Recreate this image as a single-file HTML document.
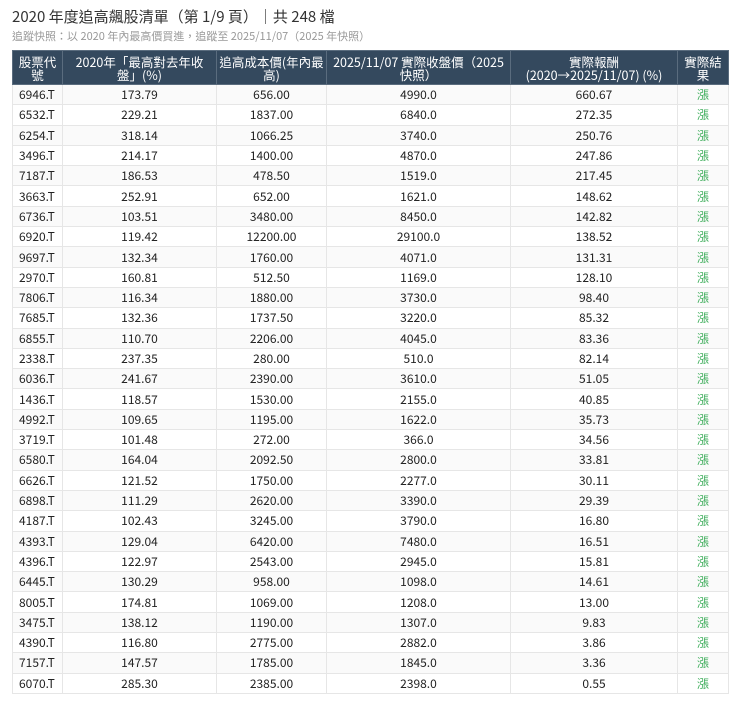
<!DOCTYPE html><html><head><meta charset="utf-8"><style>
body{margin:0;background:#fff;font-family:"Noto Sans CJK TC",sans-serif;color:#222}
.t{position:absolute;left:12px;top:6px;font-size:15px;color:#333;line-height:22px}
.s{position:absolute;left:12px;top:28px;font-size:11px;color:#999;line-height:16px}
table{position:absolute;left:12px;top:50px;width:716px;border-collapse:collapse;font-size:12px;table-layout:fixed}
th{background:#34495e;color:#fff;font-weight:normal;height:33px;line-height:13px;padding:0;border:1px solid #5a6c7e;font-size:12.5px;white-space:nowrap;overflow:hidden}
td{height:19.3px;text-align:center;border:1px solid #e6e6e6;padding:0;line-height:19px}
td:first-child{text-align:left;padding-left:6px}
tr:nth-child(even) td{background:#fafafa}
td.g{color:#3fae5c}
</style></head><body>
<div class="t">2020 年度追高飆股清單（第 1/9 頁）｜共 248 檔</div>
<div class="s">追蹤快照：以 2020 年內最高價買進，追蹤至 2025/11/07（2025 年快照）</div>
<table>
<colgroup><col style="width:50px"><col style="width:154px"><col style="width:110px"><col style="width:184px"><col style="width:167px"><col style="width:51px"></colgroup>
<tr><th>股票代<br>號</th><th>2020年「最高對去年收<br>盤」(%)</th><th>追高成本價(年內最<br>高)</th><th>2025/11/07 實際收盤價（2025<br>快照）</th><th>實際報酬<br>(2020→2025/11/07) (%)</th><th>實際結<br>果</th></tr>
<tr><td>6946.T</td><td>173.79</td><td>656.00</td><td>4990.0</td><td>660.67</td><td class="g">漲</td></tr>
<tr><td>6532.T</td><td>229.21</td><td>1837.00</td><td>6840.0</td><td>272.35</td><td class="g">漲</td></tr>
<tr><td>6254.T</td><td>318.14</td><td>1066.25</td><td>3740.0</td><td>250.76</td><td class="g">漲</td></tr>
<tr><td>3496.T</td><td>214.17</td><td>1400.00</td><td>4870.0</td><td>247.86</td><td class="g">漲</td></tr>
<tr><td>7187.T</td><td>186.53</td><td>478.50</td><td>1519.0</td><td>217.45</td><td class="g">漲</td></tr>
<tr><td>3663.T</td><td>252.91</td><td>652.00</td><td>1621.0</td><td>148.62</td><td class="g">漲</td></tr>
<tr><td>6736.T</td><td>103.51</td><td>3480.00</td><td>8450.0</td><td>142.82</td><td class="g">漲</td></tr>
<tr><td>6920.T</td><td>119.42</td><td>12200.00</td><td>29100.0</td><td>138.52</td><td class="g">漲</td></tr>
<tr><td>9697.T</td><td>132.34</td><td>1760.00</td><td>4071.0</td><td>131.31</td><td class="g">漲</td></tr>
<tr><td>2970.T</td><td>160.81</td><td>512.50</td><td>1169.0</td><td>128.10</td><td class="g">漲</td></tr>
<tr><td>7806.T</td><td>116.34</td><td>1880.00</td><td>3730.0</td><td>98.40</td><td class="g">漲</td></tr>
<tr><td>7685.T</td><td>132.36</td><td>1737.50</td><td>3220.0</td><td>85.32</td><td class="g">漲</td></tr>
<tr><td>6855.T</td><td>110.70</td><td>2206.00</td><td>4045.0</td><td>83.36</td><td class="g">漲</td></tr>
<tr><td>2338.T</td><td>237.35</td><td>280.00</td><td>510.0</td><td>82.14</td><td class="g">漲</td></tr>
<tr><td>6036.T</td><td>241.67</td><td>2390.00</td><td>3610.0</td><td>51.05</td><td class="g">漲</td></tr>
<tr><td>1436.T</td><td>118.57</td><td>1530.00</td><td>2155.0</td><td>40.85</td><td class="g">漲</td></tr>
<tr><td>4992.T</td><td>109.65</td><td>1195.00</td><td>1622.0</td><td>35.73</td><td class="g">漲</td></tr>
<tr><td>3719.T</td><td>101.48</td><td>272.00</td><td>366.0</td><td>34.56</td><td class="g">漲</td></tr>
<tr><td>6580.T</td><td>164.04</td><td>2092.50</td><td>2800.0</td><td>33.81</td><td class="g">漲</td></tr>
<tr><td>6626.T</td><td>121.52</td><td>1750.00</td><td>2277.0</td><td>30.11</td><td class="g">漲</td></tr>
<tr><td>6898.T</td><td>111.29</td><td>2620.00</td><td>3390.0</td><td>29.39</td><td class="g">漲</td></tr>
<tr><td>4187.T</td><td>102.43</td><td>3245.00</td><td>3790.0</td><td>16.80</td><td class="g">漲</td></tr>
<tr><td>4393.T</td><td>129.04</td><td>6420.00</td><td>7480.0</td><td>16.51</td><td class="g">漲</td></tr>
<tr><td>4396.T</td><td>122.97</td><td>2543.00</td><td>2945.0</td><td>15.81</td><td class="g">漲</td></tr>
<tr><td>6445.T</td><td>130.29</td><td>958.00</td><td>1098.0</td><td>14.61</td><td class="g">漲</td></tr>
<tr><td>8005.T</td><td>174.81</td><td>1069.00</td><td>1208.0</td><td>13.00</td><td class="g">漲</td></tr>
<tr><td>3475.T</td><td>138.12</td><td>1190.00</td><td>1307.0</td><td>9.83</td><td class="g">漲</td></tr>
<tr><td>4390.T</td><td>116.80</td><td>2775.00</td><td>2882.0</td><td>3.86</td><td class="g">漲</td></tr>
<tr><td>7157.T</td><td>147.57</td><td>1785.00</td><td>1845.0</td><td>3.36</td><td class="g">漲</td></tr>
<tr><td>6070.T</td><td>285.30</td><td>2385.00</td><td>2398.0</td><td>0.55</td><td class="g">漲</td></tr>
</table></body></html>
